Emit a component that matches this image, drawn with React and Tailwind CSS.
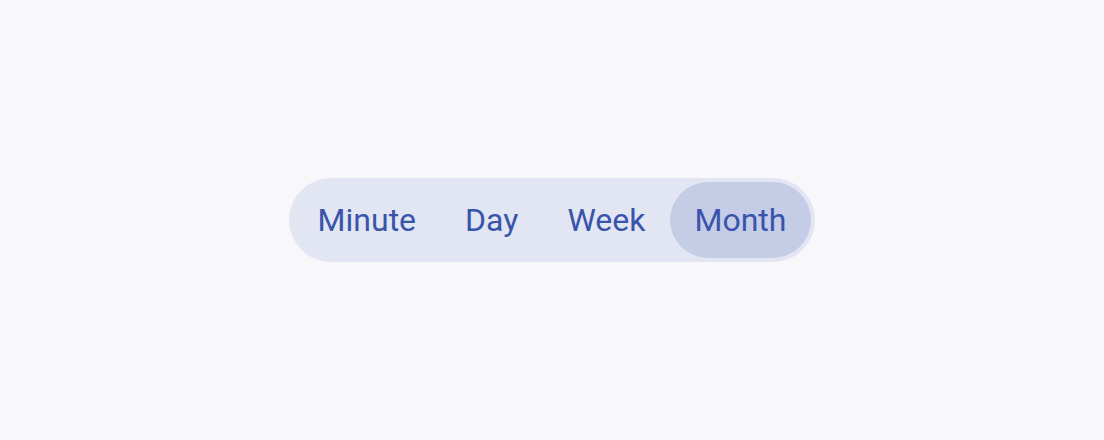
import React, { useState } from 'react';

const options = ['Minute', 'Day', 'Week', 'Month'];

export default function App() {
  const [active, setActive] = useState('Month');

  return (
    <div className="min-h-screen w-full bg-[#f8f8fb] flex items-center justify-center" style={{ fontFamily: 'Roboto, "Noto Sans", sans-serif' }}>
      <div className="flex items-center p-1 rounded-full bg-[#e2e5f2]">
        {options.map((opt) => (
          <button
            key={opt}
            onClick={() => setActive(opt)}
            className={
              'h-[76px] px-[24.5px] rounded-full text-[32px] leading-none text-[#3854ab] pb-px ' +
              (active === opt ? 'bg-[#c5cce6]' : 'bg-transparent')
            }
          >
            {opt}
          </button>
        ))}
      </div>
    </div>
  );
}
